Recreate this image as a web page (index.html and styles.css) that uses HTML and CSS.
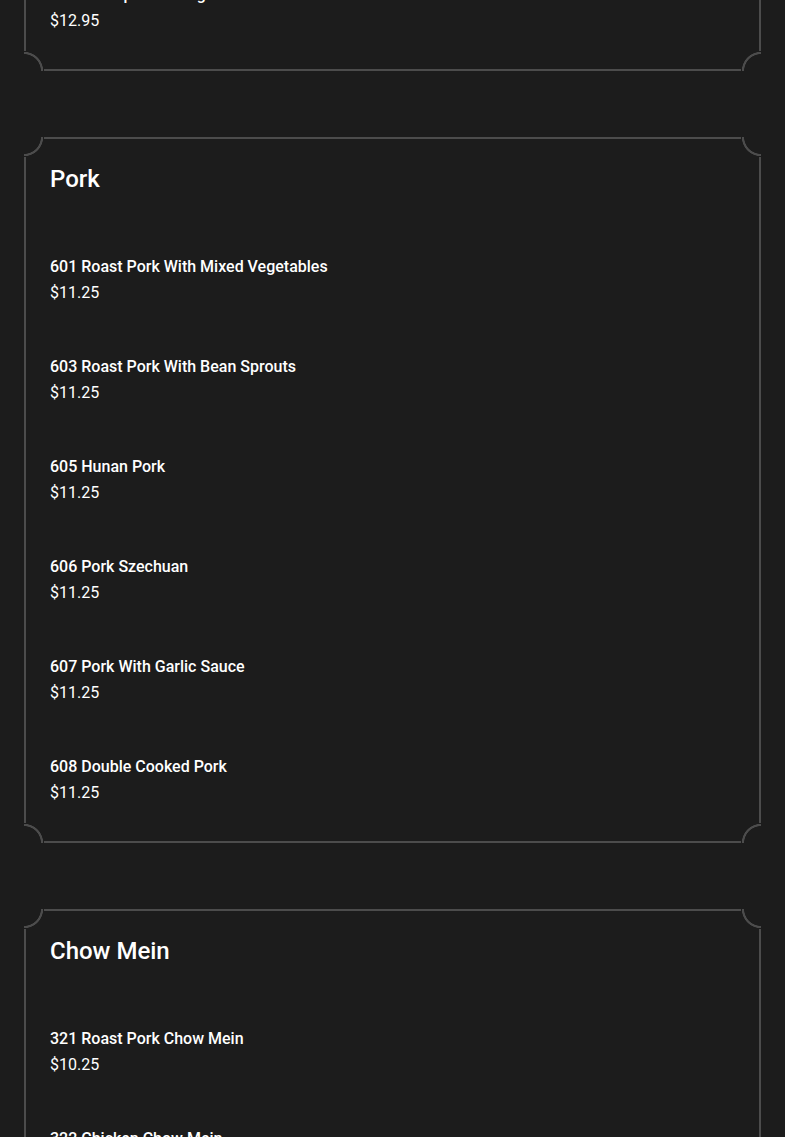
FILE: index.html
```html
<!DOCTYPE html>
<html lang="en">
<head>
<meta charset="utf-8">
<title>Menu</title>
<link rel="stylesheet" href="styles.css">
</head>
<body>
<main class="menu">
  <section class="card card-scrolled">
    <span class="corner tl"></span><span class="corner tr"></span><span class="corner bl"></span><span class="corner br"></span>
    <h2 class="card-title">Seafood</h2>
    <ul class="items">
      <li class="item"><span class="item-name">510 Shrimp With Ginger Sauce</span><span class="item-price">$12.95</span></li>
    </ul>
  </section>

  <section class="card">
    <span class="corner tl"></span><span class="corner tr"></span><span class="corner bl"></span><span class="corner br"></span>
    <h2 class="card-title">Pork</h2>
    <ul class="items">
      <li class="item"><span class="item-name">601 Roast Pork With Mixed Vegetables</span><span class="item-price">$11.25</span></li>
      <li class="item"><span class="item-name">603 Roast Pork With Bean Sprouts</span><span class="item-price">$11.25</span></li>
      <li class="item"><span class="item-name">605 Hunan Pork</span><span class="item-price">$11.25</span></li>
      <li class="item"><span class="item-name">606 Pork Szechuan</span><span class="item-price">$11.25</span></li>
      <li class="item"><span class="item-name">607 Pork With Garlic Sauce</span><span class="item-price">$11.25</span></li>
      <li class="item"><span class="item-name">608 Double Cooked Pork</span><span class="item-price">$11.25</span></li>
    </ul>
  </section>

  <section class="card">
    <span class="corner tl"></span><span class="corner tr"></span><span class="corner bl"></span><span class="corner br"></span>
    <h2 class="card-title">Chow Mein</h2>
    <ul class="items">
      <li class="item"><span class="item-name">321 Roast Pork Chow Mein</span><span class="item-price">$10.25</span></li>
      <li class="item"><span class="item-name">322 Chicken Chow Mein</span><span class="item-price">$10.25</span></li>
      <li class="item"><span class="item-name">323 Beef Chow Mein</span><span class="item-price">$10.25</span></li>
    </ul>
  </section>
</main>
</body>
</html>
```
FILE: styles.css
```css
html, body {
  margin: 0;
  padding: 0;
  background: #1c1c1c;
  overflow: hidden;
}

body {
  font-family: Roboto, "Liberation Sans", Arial, sans-serif;
  color: #ffffff;
}

.menu {
  display: flex;
  flex-direction: column;
  gap: 66px;
  padding: 0 24px;
}

.card {
  position: relative;
  border: 2px solid #4c4c4c;
  padding: 26px 24px 35px;
  background: #1c1c1c;
}

.card-scrolled {
  margin-top: -135px;
}

.corner {
  position: absolute;
  width: 20px;
  height: 20px;
}

.corner.tl {
  top: -2px;
  left: -2px;
  background: radial-gradient(circle at 0 0, #1c1c1c 16.6px, #4c4c4c 17.2px, #4c4c4c 18.8px, #1c1c1c 19.4px);
}

.corner.tr {
  top: -2px;
  right: -2px;
  background: radial-gradient(circle at 100% 0, #1c1c1c 16.6px, #4c4c4c 17.2px, #4c4c4c 18.8px, #1c1c1c 19.4px);
}

.corner.bl {
  bottom: -2px;
  left: -2px;
  background: radial-gradient(circle at 0 100%, #1c1c1c 16.6px, #4c4c4c 17.2px, #4c4c4c 18.8px, #1c1c1c 19.4px);
}

.corner.br {
  bottom: -2px;
  right: -2px;
  background: radial-gradient(circle at 100% 100%, #1c1c1c 16.6px, #4c4c4c 17.2px, #4c4c4c 18.8px, #1c1c1c 19.4px);
}

.card-title {
  margin: 0 0 60px;
  font-size: 24px;
  line-height: 29px;
  font-weight: 500;
}

.items {
  list-style: none;
  margin: 0;
  padding: 0;
  display: flex;
  flex-direction: column;
  gap: 48px;
}

.item {
  display: flex;
  flex-direction: column;
  font-size: 16px;
  line-height: 26px;
}

.item-name {
  font-weight: 500;
}

.item-price {
  font-weight: 400;
}
```
